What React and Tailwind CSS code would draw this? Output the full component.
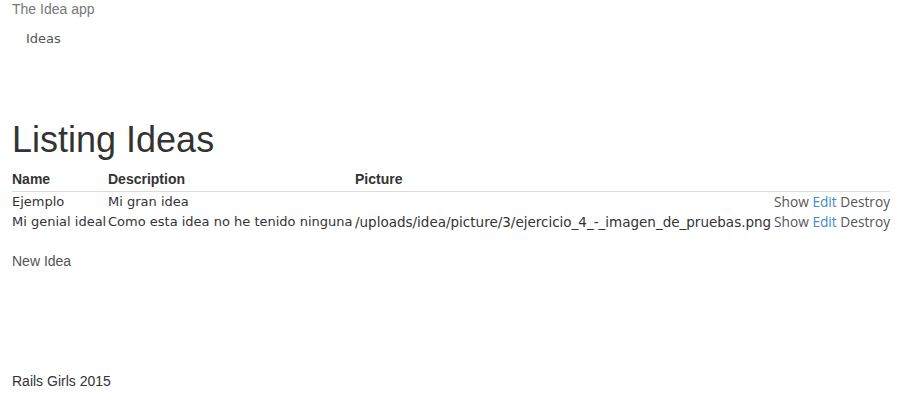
import React from "react";

const ideas = [
  { name: "Ejemplo", description: "Mi gran idea", picture: "" },
  {
    name: "Mi genial ideal",
    description: "Como esta idea no he tenido ninguna",
    picture: "/uploads/idea/picture/3/ejercicio_4_-_imagen_de_pruebas.png",
  },
];

export default function App() {
  return (
    <div className="min-h-screen bg-white text-[#333] font-['Liberation_Sans',Arial,sans-serif]">
      {/* Navbar */}
      <div className="pl-[12px] pt-[1px]">
        <div className="text-[14px] leading-[17px] text-[#777]">The Idea app</div>
        <div className="pl-[14px] pt-[13px] text-[13px] leading-[16px] text-[#555] font-['DejaVu_Sans',sans-serif]">
          Ideas
        </div>
      </div>

      {/* Main content */}
      <main className="pl-[12px] pr-[10px] pt-[73px]">
        <h1 className="text-[36px] leading-[40px] text-[#333] mb-[11px]">Listing Ideas</h1>

        <div className="grid grid-cols-[96px_247px_1fr_auto] text-[13px]">
          <div className="font-bold text-[14px] leading-[17px] pb-[3px] border-b border-[#ddd]">Name</div>
          <div className="font-bold text-[14px] leading-[17px] pb-[3px] border-b border-[#ddd]">Description</div>
          <div className="font-bold text-[14px] leading-[17px] pb-[3px] border-b border-[#ddd]">Picture</div>
          <div className="border-b border-[#ddd]" />

          {ideas.map((idea) => (
            <React.Fragment key={idea.name}>
              <div className="font-['DejaVu_Sans',sans-serif] h-[20px] leading-[20px] whitespace-nowrap">{idea.name}</div>
              <div className="font-['DejaVu_Sans',sans-serif] h-[20px] leading-[20px] whitespace-nowrap">{idea.description}</div>
              <div className="font-['DejaVu_Sans',sans-serif] text-[13.5px] h-[20px] leading-[20px] whitespace-nowrap">{idea.picture}</div>
              <div className="font-['Open_Sans',sans-serif] text-[13.7px] h-[20px] leading-[20px] text-right whitespace-nowrap">
                <span className="text-[#555]">Show</span>{" "}
                <span className="text-[#428bca]">Edit</span>{" "}
                <span className="text-[#555]">Destroy</span>
              </div>
            </React.Fragment>
          ))}
        </div>

        <div className="mt-[19px] text-[14px] leading-[20px] text-[#555]">New Idea</div>
      </main>

      <footer className="pl-[12px] pt-[100px] text-[14px] leading-[20px] text-[#333]">Rails Girls 2015</footer>
    </div>
  );
}
